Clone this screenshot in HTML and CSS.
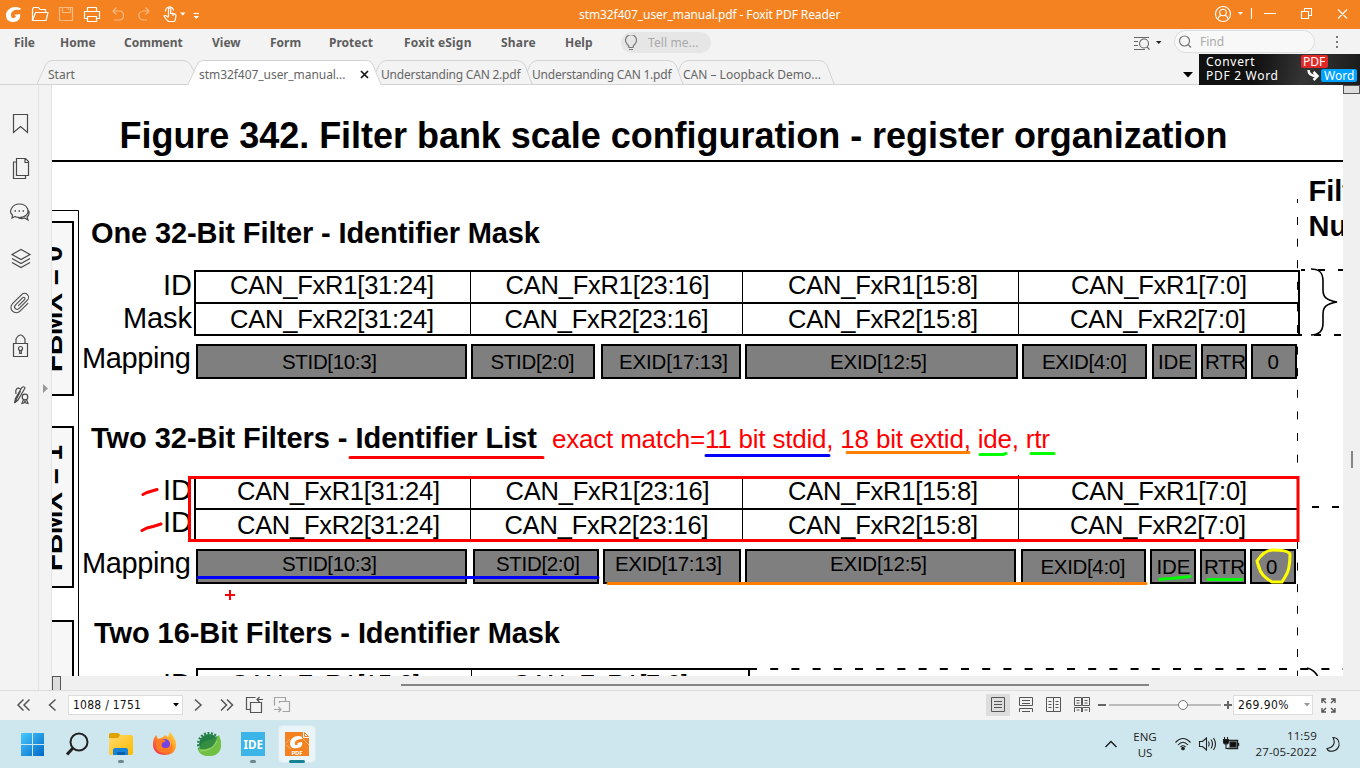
FILE: index.html
```html
<!DOCTYPE html>
<html lang="en">
<head>
<meta charset="utf-8">
<title>stm32f407_user_manual.pdf - Foxit PDF Reader</title>
<link rel="stylesheet" href="styles.css">
</head>
<body>
<div class="app">
  <header class="titlebar">
    <svg class="quick" width="205" height="29" viewBox="0 0 205 29" fill="none" stroke="#fff" stroke-width="1.2">
      <path d="M20 8C14 5 6 9 6 15c0 5 3 7 7 7 5 0 8-3 7-8l-6 1 2 1c-1 3-5 3-5-1 0-4 4-6 9-5l1-2z" fill="#fff" stroke="none"/>
      <path d="M32.5 20.500V9.500l1-2h5l1.500 2h5.500v3M32.500 20.500l3-8h12.500l-2 8z"/>
      <path d="M59.500 7.500h13v13h-13zM62.500 7.500v5h8v-5M68.500 8v2" opacity=".45"/>
      <path d="M87.500 11.500v-4h9v4M87.500 18.500h-3v-7h15v7h-3M87.500 16.500h9v5h-9z"/>
      <path d="M116.500 7.500l-3.500 3.500 3.500 3.500M113 11h6c6 0 6 9 0 9h-5M145.500 7.500l3.500 3.500-3.500 3.500M149 11h-5c-7 0-7 9 0 9h3" opacity=".45"/>
      <path d="M168.500 16.500V9q1-2 2.200 0v4.500q4.800-.5 5.300 2-.3 4-1.500 6h-6c-2-1.500-3.500-3.500-4.500-5.500q1.500-1.500 4.500 1.500M173 14v2M165.500 11.500a4 4 0 1 1 8 -1"/>
      <path d="M180 12.500h5.500l-2.700 3zM193.500 16h5.500l-2.700 3z" fill="#fff" stroke="none"/><path d="M193.500 13.500h5.500"/>
    </svg>
    <div class="title">stm32f407_user_manual.pdf - Foxit PDF Reader</div>
    <svg class="winctl" width="150" height="29" viewBox="0 0 150 29" fill="none" stroke="#fff" stroke-width="1.1">
      <circle cx="13" cy="14" r="7.500"/><circle cx="13" cy="12.500" r="3.300"/><path d="M8 19q.5-3 3-3.500M18 19q-.5-3-3-3.500"/>
      <path d="M28 12h5l-2.500 3z" fill="#fff" stroke="none"/><path d="M41.500 8v11M54 13.500h12M91.500 11.500h7v7h-7zM94.500 11V8.500h7v7H99M128 9.500l9 9M137 9.500l-9 9"/>
    </svg>
  </header>

  <nav class="menubar">
    <span class="m-file">File</span><span class="m-home">Home</span><span class="m-comment">Comment</span><span class="m-view">View</span><span class="m-form">Form</span><span class="m-protect">Protect</span><span class="m-esign">Foxit eSign</span><span class="m-share">Share</span><span class="m-help">Help</span>
    <div class="tell"><svg width="14" height="16" viewBox="0 0 14 16" fill="none" stroke="#777" stroke-width="1.200"><path d="M5 12.500q0-2-2-3.500a5.500 5.500 0 1 1 8 0q-2 1.500-2 3.500zM5 14.500h4"/></svg><span>Tell me...</span></div>
    <svg class="advanced" width="32" height="16" viewBox="0 0 32 16" fill="none" stroke="#666" stroke-width="1.100"><path d="M0 2.500h15M0 6.500h4M0 10.500h4M0 14.500h11M13 12l2.500 2.500"/><circle cx="10" cy="8.500" r="4.500"/><path d="M22 6h5.500l-2.700 3z" fill="#222" stroke="none"/></svg>
    <div class="find"><svg width="14" height="14" viewBox="0 0 14 14" fill="none" stroke="#777" stroke-width="1.200"><circle cx="6.500" cy="6" r="5"/><path d="M10 9.500l3 3"/></svg><span>Find</span></div>
    <svg class="dots" width="4" height="14" viewBox="0 0 4 14" fill="#777"><path d="M1 0h2v2H1zM1 5h2v2H1zM1 10h2v2H1z"/></svg>
  </nav>

  <div class="tabs">
    <svg class="tab-shapes" width="1360" height="28" viewBox="0 0 1360 28" fill="none" stroke="#d4d4d4">
      <path d="M0 27.500h1360" />
      <path d="M37 27L46 7q3-3.500 6-3.500h130q6 0 9 5l3 6"/>
      <path d="M376 15l3-7q3-4.500 7-4.500h131q5 0 8 4.500l7 19M527 15l3-7q3-4.500 7-4.500h131q5 0 8 4.500l7 19M678 15l3-7q3-4.500 7-4.500h131q5 0 8 4.500l7 19"/>
      <path d="M188 27.500L197 8q2-4.500 7-4.500h162q5 0 7 4.500l8 19.500" fill="#fff"/><path d="M189 27.500h191" stroke="#fff"/>
    </svg>
    <span class="t-start">Start</span><span class="t-manual">stm32f407_user_manual...</span>
    <svg class="close" width="9" height="9" viewBox="0 0 9 9" stroke="#111" stroke-width="1.600"><path d="M1 1l7 7M8 1L1 8"/></svg>
    <span class="t-can2">Understanding CAN 2.pdf</span><span class="t-can1">Understanding CAN 1.pdf</span><span class="t-loop">CAN – Loopback Demo...</span>
    <svg class="tabmenu" width="10" height="6" viewBox="0 0 10 6"><path d="M0 0h10L5 5.500z"/></svg>
    <div class="promo"><div class="promo-text"><div>Convert</div><div>PDF 2 Word</div></div><div class="promo-tags"><b class="pdf">PDF</b><div><svg width="14" height="13" viewBox="0 0 14 13" fill="none" stroke="#fff" stroke-width="2.500"><path d="M2.500 1q0 6 8 6M7.500 3l4 4-4 4"/></svg><b class="word">Word</b></div></div></div>
  </div>

  <main class="work">
    <aside class="rail">
      <svg width="28" height="320" viewBox="0 0 28 320" fill="none" stroke="#4a4a4a" stroke-width="1.200">
        <path d="M6.500 29.500h14v18l-7-6-7 6z"/>
        <path d="M9.500 73.500h9l3 3v14h-12zM18 73.500v4h4M9 77H6.500v16.500h12V91"/>
        <path d="M8 131.500l-3 1.500.5-3c-2-1.500-2.500-4-1-6.500 3-6 13-6 16 0 2 5-2 9-8 9q-3 0-4.500-1zM20.500 124.500c2.500 2 2 5.500-.5 7.500l1 3-3.500-2c-3 1-5.500.5-7-1"/><path d="M7.500 126h1.500M11.500 126h1.500M15.500 126h1.500" stroke-width="1.600"/>
        <path d="M5 169.500l9-5 9 5-9 5zM5 173.500l9 5 9-5M5 177.500l9 5 9-5"/>
        <g transform="rotate(45 14 218)" stroke-width="1.100"><path d="M11.500 213v10.500a2.500 2.500 0 0 0 5 0v-12a4 4 0 0 0-8 0v13a5.300 5.300 0 0 0 10.600 0V213M11.500 213a1.300 1.300 0 0 1 2.600 0v9"/></g>
        <path d="M6.500 258.500h14v13h-14zM9 258v-4q4.500-8 9 0v4"/><circle cx="13.500" cy="263.500" r="2"/><path d="M12.700 265.500v3h1.600v-3"/>
        <path d="M7.500 318l1-4.500 6-10.500q2.500-2.500 3.500 0l-7 12-3.500 3 6-12M9 309q-1-5 2-6l2.500 1"/><circle cx="18" cy="312" r="2.800"/><path d="M16.500 314.500l-1.500 4 2-.5 1-2 1 2 2 .5-1.500-4"/>
      </svg>
    </aside>
    <div class="handle"><svg width="6" height="10" viewBox="0 0 6 10"><path d="M0 0v9l5-4.500z" fill="#999"/></svg></div>
    <section class="document">
      <svg class="page" width="1291" height="591" viewBox="52 85 1291 591">
        <g fill="#f7f7f7" stroke="#000" stroke-width="2">
          <path d="M50 222h23v173H50M50 427h23v160H50M50 621h23v70H50"/>
        </g>
        <path d="M50 210.500h28.500V680" fill="none" stroke="#000"/>
        <path d="M52 161h1291" stroke="#000" stroke-width="2"/>
        <g font-weight="bold">
          <text x="119.500" y="148" font-size="36" textLength="1108">Figure 342. Filter bank scale configuration - register organization</text>
          <g font-size="29">
            <text x="91" y="243" textLength="449">One 32-Bit Filter - Identifier Mask</text>
            <text x="91" y="448" textLength="446">Two 32-Bit Filters - Identifier List</text>
            <text x="94" y="643" textLength="466">Two 16-Bit Filters - Identifier Mask</text>
            <text x="1308.500" y="201">Filter</text><text x="1308.500" y="236">Number</text>
          </g>
          <g font-size="28"><text transform="translate(62 372) rotate(-90)" textLength="126">FBMX = 0</text><text transform="translate(62 571) rotate(-90)" textLength="126">FBMX = 1</text></g>
        </g>
        <text class="note" x="552" y="448" font-size="26" textLength="498">exact match=11 bit stdid, 18 bit extid, ide, rtr</text>
        <g font-size="29" text-anchor="end">
          <text x="192" y="295">ID</text><text x="192" y="328" textLength="69">Mask</text><text x="191" y="368" textLength="109">Mapping</text>
          <text x="192" y="500">ID</text><text x="192" y="532">ID</text><text x="191" y="573" textLength="109">Mapping</text><text x="192" y="694">ID</text>
        </g>
        <g fill="none" stroke="#000">
          <path d="M195 270v66M194 271h1105v63M194 335h1108M196 303h1103M195 477v64M196 509h1102M197 690v-21h552v20" stroke-width="2"/>
          <path d="M470.500 271v64M742.500 271v64M1018.500 271v64M470.500 477v64M742.500 477v64M1018.500 475v66M471.500 669v20"/>
          <path d="M1297.500 199v4M1297.500 217v459" stroke-dasharray="8 13.600"/>
          <path d="M1301 270h4m13 0h7m13 0h5M1314 335h7m13 0h7M1312 507h7m13 0h7" stroke-width="2"/>
          <path d="M749 669h594" stroke-width="2" stroke-dasharray="8 13.200"/>
          <path d="M1311 269c9 0 12 4 12 12v9c0 7 3 10 14 12-11 2-14 5-14 12v9c0 7-3 12-12 12M1307 668q8 2 11 9" stroke-width="1.600"/>
        </g>
        <g font-size="25.500" lengthAdjust="spacingAndGlyphs">
          <text x="230" y="294" textLength="204">CAN_FxR1[31:24]</text><text x="505.500" y="294" textLength="204">CAN_FxR1[23:16]</text><text x="788" y="294" textLength="190">CAN_FxR1[15:8]</text><text x="1071" y="294" textLength="176">CAN_FxR1[7:0]</text>
          <text x="230" y="328" textLength="204">CAN_FxR2[31:24]</text><text x="504.500" y="328" textLength="204">CAN_FxR2[23:16]</text><text x="788" y="328" textLength="190">CAN_FxR2[15:8]</text><text x="1070" y="328" textLength="176">CAN_FxR2[7:0]</text>
          <text x="237" y="500" textLength="203">CAN_FxR1[31:24]</text><text x="505.500" y="500" textLength="204">CAN_FxR1[23:16]</text><text x="788" y="500" textLength="190">CAN_FxR1[15:8]</text><text x="1071" y="500" textLength="176">CAN_FxR1[7:0]</text>
          <text x="237" y="534" textLength="203">CAN_FxR2[31:24]</text><text x="504.500" y="534" textLength="204">CAN_FxR2[23:16]</text><text x="788" y="534" textLength="190">CAN_FxR2[15:8]</text><text x="1070" y="534" textLength="176">CAN_FxR2[7:0]</text>
          <text x="230" y="693" textLength="190">CAN_FxR1[15:8]</text><text x="512" y="693" textLength="176">CAN_FxR1[7:0]</text>
        </g>
        <g fill="#7f7f7f" stroke="#000" stroke-width="2">
          <path d="M197 345h269v33H197zM472 345h122v33H472zM602 345h138v33H602zM746 345h271v33H746zM1023 345h123v33h-123zM1153 345h43v33h-43zM1202 345h44v33h-44zM1252 345h44v33h-44z"/>
          <path d="M197 550h269v33H197zM474 550h124v33H474zM604 550h136v33H604zM746 550h269v33H746zM1022 550h123v33h-123zM1151 550h44v33h-44zM1201 550h44v33h-44zM1251 550h44v33h-44z"/>
        </g>
        <g font-size="20.500">
          <text x="282" y="369" textLength="95">STID[10:3]</text><text x="490.500" y="369" textLength="84">STID[2:0]</text><text x="619" y="369" textLength="109">EXID[17:13]</text><text x="830" y="369" textLength="97">EXID[12:5]</text><text x="1042" y="369" textLength="85">EXID[4:0]</text><text x="1158" y="369" textLength="34">IDE</text><text x="1205" y="369" textLength="41">RTR</text><text x="1267.500" y="369">0</text>
          <text x="282" y="571" textLength="95">STID[10:3]</text><text x="496" y="571" textLength="84">STID[2:0]</text><text x="615" y="571" textLength="107">EXID[17:13]</text><text x="830" y="571" textLength="97">EXID[12:5]</text><text x="1040.500" y="574" textLength="85">EXID[4:0]</text><text x="1156.500" y="574" textLength="34">IDE</text><text x="1204" y="574" textLength="41">RTR</text><text x="1266" y="574">0</text>
        </g>
        <g fill="none" stroke-width="3" stroke-linecap="round">
          <path d="M189.500 477.500h1108.500v63h-1108.500z" stroke="red"/>
          <path d="M350 457.500h193M143 494.500l4-2 5-1.500 5-1.500M142 530.500l5-2.500 6-1.500 8-2.500" stroke="red"/>
          <path d="M225 595h10M230 590v10" stroke="red" stroke-width="2" stroke-linecap="butt"/>
          <path d="M706 455.500h123M198 577.500h400" stroke="blue"/>
          <path d="M847 452.500h122M608 583.500h538" stroke="#ff8000"/>
          <path d="M980 454.500h23l3-1M1031 453.500h23M1160 579.500q5-1 12-1l18-2M1208 579.500h34" stroke="#0f0"/>
          <path d="M1257 561c4-6 10-11 16-11s15 0 17 4c0 8-1 18-5 23l-3 5h-10c-7-4-12-9-13-15zM1257 561l2 7" stroke="#ff0"/>
        </g>
      </svg>
      <div class="hscroll"><i></i><b></b></div>
    </section>
    <div class="vscroll"><i></i><b></b></div>
  </main>

  <footer class="status">
    <svg class="pager-left" width="42" height="16" viewBox="0 0 42 16" fill="none" stroke="#555" stroke-width="1.500"><path d="M7.500 2.500L2 8l5.500 5.500M13.500 2.500L8 8l5.500 5.500M39.500 2.500L33.500 8l6 5.500"/></svg>
    <div class="pagebox"><span>1088 / 1751</span><svg width="6" height="4" viewBox="0 0 6 4"><path d="M0 0h6L3 3.500z"/></svg></div>
    <svg class="pager-right" width="98" height="18" viewBox="0 0 98 18" fill="none" stroke="#555" stroke-width="1.500"><path d="M2 3.500L8 9l-6 5.500M28 3.500l5.500 5.500-5.500 5.500M34 3.500L39.500 9 34 14.500"/><g stroke-width="1.200"><path d="M57 13.500h-3.500v-12h9M57.500 6.500h11v10h-11zM70 3.500h-6M66.500 1L64 3.500 66.500 6"/><path opacity=".5" d="M82 9h-.5V1.500h11v4M86.500 7V5.500h10v10h-7M81 13.500h7M85.500 11l2.500 2.500L85.500 16"/></g></svg>
    <div class="layouts">
      <svg class="on" width="24" height="22" viewBox="0 0 24 22"><path d="M5.500 3.500h13v14h-13zM8 7.500h8M8 10.500h8M8 13.500h8"/></svg>
      <svg width="24" height="22" viewBox="0 0 24 22"><path d="M5.500 3.500h13v8h-13zM8 6.500h8M8 9.500h8M5.500 18v-3.500h13V18M8 17.500h8"/></svg>
      <svg width="24" height="22" viewBox="0 0 24 22"><path d="M4.500 3.500h7v14h-7zM11.500 3.500h7v14h-7zM6.500 7.500h3M6.500 10.500h3M6.500 13.500h3M13.500 7.500h3M13.500 10.500h3M13.500 13.500h3"/></svg>
      <svg width="24" height="22" viewBox="0 0 24 22"><path d="M4.500 3.500h7v8h-7zM12.500 3.500h7v8h-7zM6.500 6.500h3M6.500 9h3M14.500 6.500h3M14.500 9h3M4.500 18v-4.500h7V18M12.500 18v-4.500h7V18M6.500 16h3M14.500 16h3"/></svg>
    </div>
    <svg class="zoomer" width="135" height="16" viewBox="0 0 135 16"><path d="M0 8h8M126 8h8M130 4v8" stroke="#666" stroke-width="2"/><path d="M11 8h112" stroke="#bbb" stroke-width="2"/><circle cx="85" cy="8" r="4.500" fill="#fff" stroke="#777"/></svg>
    <div class="zoombox"><span>269.90%</span><svg width="6" height="4" viewBox="0 0 6 4"><path d="M0 0h6L3 3.500z" fill="#999"/></svg></div>
    <svg class="full" width="15" height="15" viewBox="0 0 15 15" fill="none" stroke="#555" stroke-width="1.400"><path d="M1 5V1h4M1 1l4 4M10 1h4v4M14 1l-4 4M1 10v4h4M1 14l4-4M14 10v4h-4M14 14l-4-4"/></svg>
  </footer>

  <footer class="taskbar">
    <svg class="apps" width="330" height="48" viewBox="0 0 330 48">
      <defs><linearGradient id="win" x2="1" y2="1"><stop stop-color="#49caff"/><stop offset="1" stop-color="#0067c6"/></linearGradient><linearGradient id="folder" x2="1" y2="1"><stop stop-color="#ffdc73"/><stop offset="1" stop-color="#ffb900"/></linearGradient><linearGradient id="fox" x1="1" x2="0" y2="1"><stop stop-color="#ffe14a"/><stop offset=".5" stop-color="#ff8b20"/><stop offset="1" stop-color="#f42064"/></linearGradient></defs>
      <path d="M21 13h11v11H21zM33 13h11v11H33zM21 25h11v11H21zM33 25h11v11H33z" fill="url(#win)"/>
      <g fill="none" stroke="#222"><circle cx="79" cy="22" r="8.500" stroke-width="2"/><path d="M73 28l-6 6.500" stroke-width="3"/></g>
      <path d="M109 15q0-2 2-2h7l3 2h10q2 0 2 2v16q0 2-2 2h-20q-2 0-2-2z" fill="url(#folder)"/><path d="M109 17v-2q0-2 2-2h7l2 2-2 3h-9z" fill="#e0a000"/><path d="M113 35v-5q0-2 2-2h11q2 0 2 2v5z" fill="#1683d8"/><path d="M117 32h8v3h-8z" fill="#0860a8"/>
      <path d="M156 15l2 4 3-1q3-1 4-3l3 2 2-5c4 5 6 8 6 13 0 7-5 10-11.500 10S153 31 153 25c0-5 1-7 3-10z" fill="url(#fox)"/><circle cx="165" cy="24" r="5" fill="#7542e5"/><path d="M157 20q6-2 9 1l-4 2q-2 5 4 5 4 0 6-4 2 9-7 9t-9-8z" fill="#ff7b24"/>
      <circle cx="209" cy="24" r="10" fill="#238045"/><circle cx="209" cy="24" r="10.800" fill="none" stroke="#238045" stroke-width="2.400" stroke-dasharray="2 1.500"/><path d="M198 30c4-8 13-6 21-15 5 13 1 21-10 21-6 0-9-2-11-6z" fill="#70c044"/><path d="M200 29c0-10 11-7 17-13-1 10-7 14-17 13z" fill="#368e43"/><path d="M200 31q13 0 17-10" fill="none" stroke="#a0d476" stroke-width="1"/>
      <path d="M241 12h24v24h-24z" fill="#3bb4e7"/><text class="ide" x="243.500" y="28.500" textLength="19.500" lengthAdjust="spacingAndGlyphs">IDE</text>
      <rect x="278.500" y="5.500" width="37" height="37" rx="4" fill="#e9f5f8" stroke="#d9eaf0"/><path d="M285 12h18v6h6v18h-24z" fill="#f58220"/><path d="M304.500 12.500v4h4z" fill="#fff" stroke="#f58220"/><path d="M286 23l4-4M302 18l7 7M286 25l5 4" stroke="#ffb376"/><path d="M302 17c-5-3-12 1-12 6s4 6 7 5c4 0 6-3 5-6l-5 1 1 1c-1 2-4 1-3-1 0-3 4-4 7-4z" fill="#fff"/><text class="mini" x="291.500" y="34.500" textLength="11">PDF</text>
      <g fill="#6f858c"><rect x="118" y="40" width="6" height="3" rx="1.500"/><rect x="250" y="40" width="6" height="3" rx="1.500"/></g><rect x="289" y="40" width="16" height="3" rx="1.500" fill="#168293"/>
    </svg>
    <svg class="chev" width="14" height="9" viewBox="0 0 14 9" fill="none" stroke="#222" stroke-width="1.500"><path d="M1.500 7L7 1.500 12.500 7"/></svg>
    <div class="lang">ENG<br>US</div>
    <svg class="tray" width="66" height="18" viewBox="0 0 66 18" fill="none" stroke="#222" stroke-width="1.100"><path d="M.5 7.500q7.500-8 15 0M3 10q5-5.500 10 0M5.500 12q2.500-2.500 5 0M24.500 6.500h3l4-3.500v12l-4-3.500h-3zM33.500 6.500q1.500 2.500 0 5M36 4.500q3 4.500 0 9M38.500 3q4 6 0 12"/><circle cx="8" cy="13.500" r="1.300" fill="#222"/><path d="M53.500 5.500h9v8h-10M63.500 8v3" stroke-width="1.400"/><path d="M55 7h6v5h-6z" fill="#111"/><path d="M48.500 4.500h5v2.500q0 2-2.500 2t-2.500-2zM49.500 2v2M52.500 2v2" fill="#111"/><path d="M51 9v4.500h3"/></svg>
    <div class="clock">11:59<br>27-05-2022</div>
    <svg class="moon" width="15" height="17" viewBox="0 0 15 17" fill="none" stroke="#222" stroke-width="1.100"><path d="M7 1.500c5 0 6.500 4 6 8-2 7-11 7-12 3 6-1 9-5 6-11z"/></svg>
  </footer>
</div>
</body>
</html>
```
FILE: styles.css
```css
* { box-sizing: border-box; }
body { margin: 0; overflow: hidden; font: 12px "DejaVu Sans Condensed", "DejaVu Sans", sans-serif; font-stretch: condensed; color: #666; }
svg { display: block; flex: none; }
.app { width: 1360px; height: 768px; display: flex; flex-direction: column; background: #f3f3f3; }
.titlebar { height: 29px; flex: none; background: #f58220; display: flex; align-items: center; color: #fff; }
.title { font-family: "Noto Sans", sans-serif; letter-spacing: -.1px; margin-left: 374px; width: 631px; white-space: nowrap; }
.menubar { height: 28px; flex: none; display: flex; align-items: center; padding: 0 0 1px 14px; font: bold 12px "Noto Sans", sans-serif; color: #5d5d5d; }
.menubar > span { flex: none; white-space: nowrap; }
.m-file { width: 46px; }
.m-home { width: 64px; }
.m-comment { width: 88px; }
.m-view { width: 58px; }
.m-form { width: 59px; }
.m-protect { width: 75px; }
.m-esign { width: 97px; letter-spacing: .2px; }
.m-share { width: 64px; letter-spacing: .2px; }
.m-help { width: 56px; }
.tell { width: 90px; height: 21px; border-radius: 11px; background: #e6e6e6; display: flex; align-items: center; gap: 10px; padding-left: 3px; font-weight: normal; color: #aaa; letter-spacing: .1px; }
.advanced { margin-left: 423px; }
.find { width: 141px; height: 23px; margin: -2px 0 0 8px; border: 1px solid #ddd; border-radius: 12px; background: #f8f8f8; display: flex; align-items: center; gap: 8px; padding-left: 3px; font-weight: normal; color: #aaa; }
.dots { margin-left: 20px; }
.tabs { height: 28px; flex: none; display: flex; align-items: center; position: relative; font-family: "Noto Sans", sans-serif; padding: 7px 0 0 48px; }
.tabs > span { position: relative; white-space: nowrap; flex: none; }
.tab-shapes { position: absolute; left: 0; top: 0; }
.t-start { width: 151px; }
.t-manual { width: 161px; letter-spacing: -.05px; }
.close, .tabmenu { position: relative; }
.tabs > .t-can2 { margin-left: 12px; width: 151px; letter-spacing: -.22px; }
.tabs > .t-can1 { width: 151px; letter-spacing: -.22px; }
.t-loop { width: 500px; }
.promo { position: relative; width: 161px; height: 31px; margin: -10px 0 0 6px; background: linear-gradient(100deg, #111 35%, #353535 65%, #1b1b1b); color: #fff; display: flex; padding: 1px 3px 0 7px; font: 12px/14px "Noto Sans", sans-serif; letter-spacing: .7px; }
.promo-text { width: 95px; flex: none; }
.promo-tags > div { display: flex; gap: 1px; margin-left: 5px; }
.promo-tags b { font-weight: normal; display: block; border-radius: 2px; line-height: 13px; letter-spacing: 0; }
.pdf { width: 27px; height: 13px; margin-bottom: 1px; padding-left: 2px; background: #df2929; }
.word { background: #00a2ff; width: 36px; padding-left: 3px; }
.work { height: 605px; flex: none; display: flex; }
.rail { width: 39px; border-right: 1px solid #e2e2e2; padding-left: 7px; }
.handle { width: 13px; border-right: 1px solid #e2e2e2; padding: 299px 0 0 4px; }
.document { width: 1291px; height: 605px; background: #fff; }
.page { font-family: "Liberation Sans", Arial, sans-serif; }
.note { fill: red; }
.hscroll { height: 14px; background: #f0f0f0; display: flex; align-items: center; }
.hscroll i { width: 9px; height: 14px; border: 1px solid #555; border-bottom: 0; background: #ddd; }
.hscroll b { width: 748px; height: 2px; margin: 4px 0 0 340px; background: #858585; }
.vscroll { width: 17px; background: #f0f0f0; }
.vscroll i { display: block; height: 9px; border: 1px solid #555; background: #ddd; }
.vscroll b { display: block; width: 2px; height: 17px; margin: 357px 0 0 8px; background: #858585; }
.status { height: 30px; flex: none; border-top: 1px solid #ddd; display: flex; align-items: center; padding: 0 0 1px 16px; color: #111; }
.pagebox { width: 115px; height: 20px; margin-left: 10px; border: 1px solid #ddd; background: #fff; display: flex; align-items: center; justify-content: space-between; padding: 0 3px 0 4px; letter-spacing: .25px; }
.pager-right { margin-left: 10px; }
.layouts { display: flex; gap: 4px; margin-left: 695px; }
.layouts svg { fill: none; stroke: #555; }
.on { background: #ddd; }
.zoomer { margin-left: 4px; }
.zoombox { width: 80px; height: 20px; margin-left: 0; border: 1px solid #ddd; background: #fff; display: flex; align-items: center; justify-content: space-between; padding: 0 2px 0 4px; letter-spacing: .4px; }
.full { margin-left: 8px; }
.taskbar { height: 48px; flex: none; background: #cee7ee; display: flex; align-items: center; font: 11px/16px "Open Sans", sans-serif; color: #222; }
.ide { font: bold 13px "Noto Sans", sans-serif; fill: #fff; }
.mini { font: bold 6px "Noto Sans", sans-serif; fill: #fff; }
.chev { margin-left: 774px; }
.lang { width: 40px; margin-left: 7px; text-align: center; padding-top: 1px; font-size: 11.5px; }
.tray { margin-left: 10px; }
.clock { width: 76px; text-align: right; white-space: nowrap; font-size: 11.5px; letter-spacing: .15px; }
.moon { margin-left: 9px; }
```
